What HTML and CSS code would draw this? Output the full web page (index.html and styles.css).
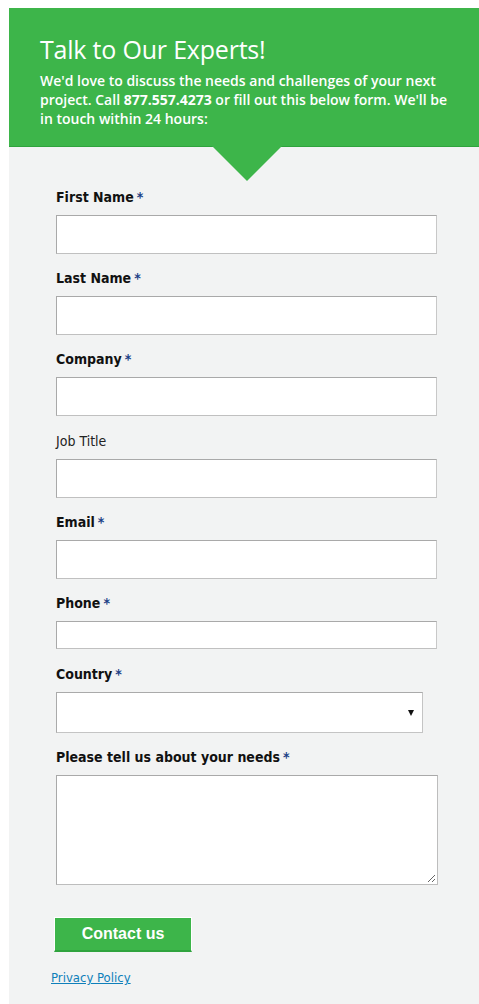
FILE: index.html
```html
<!DOCTYPE html>
<html>
<head>
<meta charset="utf-8">
<link rel="stylesheet" href="styles.css">
</head>
<body>
<div class="panel">
  <div class="hero">
    <h1 class="hero-title">Talk to Our Experts!</h1>
    <p class="hero-text">We'd love to discuss the needs and challenges of your next project. Call <strong>877.557.4273</strong> or fill out this below form. We'll be in touch within 24 hours:</p>
    <span class="hero-arrow"></span>
  </div>
  <form class="form">
    <div class="field">
      <label class="label req">First Name<span class="star">*</span></label>
      <input class="input" type="text">
    </div>
    <div class="field">
      <label class="label req">Last Name<span class="star">*</span></label>
      <input class="input" type="text">
    </div>
    <div class="field">
      <label class="label req">Company<span class="star">*</span></label>
      <input class="input" type="text">
    </div>
    <div class="field field-gap">
      <label class="label opt">Job Title</label>
      <input class="input" type="text">
    </div>
    <div class="field">
      <label class="label req">Email<span class="star">*</span></label>
      <input class="input" type="text">
    </div>
    <div class="field">
      <label class="label req">Phone<span class="star">*</span></label>
      <input class="input input-short" type="text">
    </div>
    <div class="field field-gap">
      <label class="label req">Country<span class="star">*</span></label>
      <div class="select">
        <span class="select-arrow"></span>
      </div>
    </div>
    <div class="field">
      <label class="label req">Please tell us about your needs<span class="star">*</span></label>
      <div class="textarea">
        <svg class="grip" width="9" height="9" viewBox="0 0 9 9"><path d="M8 1 L1 8 M8 5 L5 8" stroke="#666" stroke-width="1" fill="none"/></svg>
      </div>
    </div>
    <button class="btn" type="button">Contact us</button>
    <a class="privacy" href="#">Privacy Policy</a>
  </form>
</div>
</body>
</html>
```

FILE: styles.css
```css
html, body {
  margin: 0;
  padding: 0;
  background: #ffffff;
}
.panel {
  margin: 8px 0 0 9px;
  width: 470px;
  min-height: 996px;
  background: #f2f3f3;
}
.hero {
  position: relative;
  background: #3db54a;
  border-bottom: 1px solid #2fa33d;
  padding: 25px 25px 18px 31px;
  color: #ffffff;
  font-family: "Open Sans", "Noto Sans", sans-serif;
}
.hero-title {
  margin: 0;
  font-size: 25px;
  font-weight: 400;
  line-height: 32px;
  letter-spacing: -0.2px;
}
.hero-text {
  margin: 6px 0 0 0;
  font-size: 14px;
  font-weight: 600;
  line-height: 19px;
}
.hero-text strong {
  font-weight: 700;
}
.hero-arrow {
  position: absolute;
  left: 203px;
  bottom: -35px;
  width: 0;
  height: 0;
  border-left: 35px solid transparent;
  border-right: 35px solid transparent;
  border-top: 35px solid #3db54a;
}
.form {
  padding: 40px 0 20px 47px;
  display: flex;
  flex-direction: column;
  align-items: flex-start;
}
.field {
  display: flex;
  flex-direction: column;
  margin-bottom: 14px;
}
.field-gap {
  margin-top: 1px;
}
.label {
  font-family: "DejaVu Sans Condensed", "DejaVu Sans", sans-serif;
  font-size: 14px;
  line-height: 20px;
  color: #111111;
  margin-bottom: 8px;
}
.label.req {
  font-weight: 700;
}
.label.opt {
  font-weight: 400;
  font-size: 14px;
  color: #222222;
}
.star {
  color: #1b3f86;
  margin-left: 3px;
}
.input {
  box-sizing: border-box;
  width: 381px;
  height: 39px;
  margin: 0;
  padding: 0 6px;
  background: #ffffff;
  border: 1px solid #a9a9a9;
  border-right-color: #c8c8c8;
  border-bottom-color: #c0c0c0;
  outline: none;
}
.input-short {
  height: 28px;
}
.select {
  position: relative;
  box-sizing: border-box;
  width: 367px;
  height: 41px;
  background: #ffffff;
  border: 1px solid #aaaaaa;
  border-right-color: #c4c4c4;
  border-bottom-color: #c4c4c4;
  display: flex;
  align-items: center;
  justify-content: flex-end;
  padding-right: 8px;
}
.select-arrow {
  width: 0;
  height: 0;
  border-left: 3.5px solid transparent;
  border-right: 3.5px solid transparent;
  border-top: 6px solid #111111;
}
.textarea {
  box-sizing: border-box;
  width: 382px;
  height: 110px;
  background: #ffffff;
  border: 1px solid #a9a9a9;
  border-right-color: #bdbdbd;
  border-bottom-color: #bdbdbd;
  display: flex;
  align-items: flex-end;
  justify-content: flex-end;
}
.grip {
  display: block;
  margin: 0 1px 1px 0;
}
.btn {
  margin: 18px 0 0 -2px;
  box-sizing: border-box;
  width: 138px;
  height: 35px;
  background: #3db54a;
  border: 1px solid #ffffff;
  border-bottom: 2px solid #2fa33d;
  color: #ffffff;
  font-family: "Liberation Sans", Arial, sans-serif;
  font-weight: 700;
  font-size: 16px;
  padding: 0;
  cursor: pointer;
}
.privacy {
  margin: 18px 0 0 -5px;
  font-family: "DejaVu Sans Condensed", "DejaVu Sans", sans-serif;
  font-size: 13px;
  line-height: 16px;
  color: #0f7fba;
  text-decoration: underline;
}
```
